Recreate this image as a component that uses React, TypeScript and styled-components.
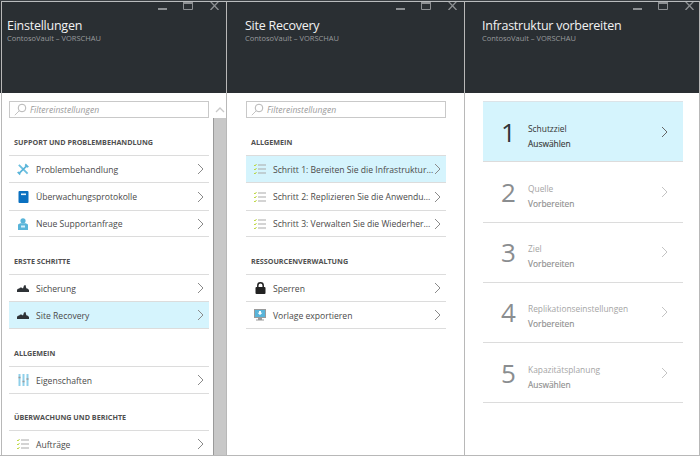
import React from "react";
import styled, { createGlobalStyle } from "styled-components";

const Global = createGlobalStyle`
  html, body { margin: 0; padding: 0; background: #fff; }
  body { font-family: "Open Sans", "Noto Sans", "Liberation Sans", sans-serif; }
`;

const Frame = styled.div`
  width: 700px;
  height: 456px;
  box-sizing: border-box;
  display: flex;
  overflow: hidden;
  padding-left: 1px;
  background: linear-gradient(#2a2f33 92px, #fff 92px);
  border-top: 1px solid #3a3f43;
  border-bottom: 1px solid #b8b8b8;
`;

const Blade = styled.section<{ $w: number; $first?: boolean }>`
  width: ${(p) => p.$w}px;
  flex: none;
  box-sizing: border-box;
  display: flex;
  flex-direction: column;
  border-right: 1px solid #b8b8b8;
  border-left: ${(p) => (p.$first ? "1px solid #b8b8b8" : "none")};
  overflow: hidden;
`;

const Header = styled.header<{ $pl: number }>`
  height: 92px;
  flex: none;
  box-sizing: border-box;
  background: #2a2f33;
  border-top: 1px solid #b9bcbe;
  padding-left: ${(p) => p.$pl}px;
  display: flex;
  flex-direction: column;
`;

const Controls = styled.div<{ $mr: number }>`
  height: 8px;
  display: flex;
  justify-content: flex-end;
  margin-right: ${(p) => p.$mr}px;
`;

const Title = styled.h1`
  margin: 6px 0 0;
  font-size: 12.5px;
  line-height: 20px;
  font-weight: 400;
  color: #f2f2f2;
  letter-spacing: -0.25px;
  white-space: nowrap;
`;

const Subtitle = styled.div`
  font-size: 7.5px;
  line-height: 9px;
  margin-top: -2px;
  color: #989b9d;
  font-weight: 400;
  white-space: nowrap;
`;

const Body = styled.div`
  flex: 1;
  display: flex;
  min-height: 0;
  overflow: hidden;
`;

const Content = styled.div<{ $pl: number }>`
  width: 200px;
  padding: 8px 0 0 ${(p) => p.$pl}px;
  flex: none;
`;

const Search = styled.div`
  height: 15px;
  border: 1px solid #c9c9c9;
  display: flex;
  align-items: center;
  gap: 3px;
  padding-left: 4px;
  color: #9a9a9a;
  font-size: 8.6px;
  font-style: italic;
`;

const SectionTitle = styled.h2<{ $top: number }>`
  margin: ${(p) => p.$top}px 0 0;
  padding-left: 5px;
  height: 12px;
  font-size: 7.2px;
  line-height: 11px;
  font-weight: 700;
  color: #505050;
  white-space: nowrap;
`;

const List = styled.div`
  margin-top: 6px;
  border-top: 1px solid #dcdcdc;
`;

const Row = styled.div<{ $active?: boolean; $h?: number }>`
  height: ${(p) => p.$h ?? 26}px;
  border-bottom: 1px solid #dcdcdc;
  background: ${(p) => (p.$active ? "#d5f4fd" : "transparent")};
  display: flex;
  align-items: center;
  padding-left: 8px;
  padding-right: 5px;
  font-size: 8.6px;
  color: #4a4a4a;
  white-space: nowrap;
`;

const RowIcon = styled.span`
  width: 12px;
  height: 14px;
  flex: none;
  margin-right: 7px;
  display: flex;
  align-items: center;
  justify-content: center;
`;

const RowLabel = styled.span`
  flex: 1;
  min-width: 0;
  padding-top: 1px;
`;

const Scrollbar = styled.div`
  width: 13px;
  margin-left: 4px;
  flex: none;
  display: flex;
  flex-direction: column;
`;

const ScrollUp = styled.div`
  height: 25px;
  flex: none;
  display: flex;
  align-items: center;
  justify-content: center;
  padding-top: 9px;
  box-sizing: border-box;
`;

const ScrollThumb = styled.div`
  flex: 1;
  background: #c8c8c8;
  border-left: 1px solid #9a9a9a;
  box-sizing: border-box;
`;

const Steps = styled.div`
  margin: 8px 0 0 18px;
  width: 200px;
  border-top: 1px solid #dce3e8;
`;

const Step = styled.div<{ $active?: boolean }>`
  height: 59.25px;
  border-bottom: 1px solid #dcdcdc;
  background: ${(p) => (p.$active ? "#d5f4fd" : "transparent")};
  display: flex;
  align-items: center;
  padding-left: 18px;
  padding-right: 15px;
  color: ${(p) => (p.$active ? "#333" : "#a5a5a5")};
`;

const StepNumber = styled.div<{ $active?: boolean }>`
  width: 27px;
  font-size: 26px;
  line-height: 30px;
  flex: none;
  color: ${(p) => (p.$active ? "#2f3438" : "#8a8d90")};
`;

const StepText = styled.div`
  flex: 1;
  font-size: 8.4px;
  line-height: 15px;
  padding-top: 8px;
`;

const StepAction = styled.div<{ $active?: boolean }>`
  color: ${(p) => (p.$active ? "#3c3c3c" : "#8f8f8f")};
  -webkit-text-stroke: 0.15px currentColor;
`;

const ControlIcon = styled.svg<{ $mr?: number }>`
  flex: none;
  margin-right: ${(p) => p.$mr ?? 0}px;
  fill: none;
  stroke: #8d9093;
`;

const ChevronIcon = styled.svg`
  flex: none;
  fill: none;
`;

const Chevron = ({ color = "#8a8a8a" }: { color?: string }) => (
  <ChevronIcon width="7" height="12" viewBox="0 0 7 12">
    <path d="M1 1l5 5-5 5" stroke={color} strokeWidth="1" />
  </ChevronIcon>
);

const Glass = () => (
  <svg width="13" height="13" viewBox="0 0 13 13">
    <circle cx="8" cy="5" r="3.8" fill="none" stroke="#b5b5b5" />
    <path d="M5.200 7.800L.8 12.200" stroke="#c4c4c4" fill="none" />
  </svg>
);

const Tools = () => (
  <svg width="13" height="13" viewBox="0 0 13 13">
    <path d="M2 1.500l9.500 9.500" stroke="#6cc0e0" strokeWidth="2" />
    <path d="M10.500 2.500L2.500 10.500" stroke="#59b4d9" strokeWidth="1.800" />
    <path d="M9.500 0l3.500 3.500-2 1.200-2.700-2.700zM0 9.800l3 3 1-1.800-2.200-2.200z" fill="#59b4d9" />
  </svg>
);
const Book = () => (
  <svg width="11" height="12" viewBox="0 0 11 12">
    <rect x=".5" y="0" width="10" height="12" rx="1" fill="#0a70c0" />
    <rect x="3" y="2.500" width="5" height="1.600" fill="#e6f4fb" />
  </svg>
);
const Support = () => (
  <svg width="10" height="12" viewBox="0 0 10 12">
    <circle cx="5" cy="2.800" r="2.600" fill="#59b4d9" />
    <path d="M0 12V6.500l2.200-1.200h5.600L10 6.500V12z" fill="#59b4d9" />
    <path d="M3 7.500h4v2H3z" fill="#d4effa" />
  </svg>
);
const Cloud = () => (
  <svg width="12" height="7" viewBox="0 0 12 7">
    <path d="M0 7V5.500C0 4.300 1 3.500 2.200 3.600 2.800 2.600 3.800 2.300 4.800 2.800L6 3.600 7 .5 8.500 0l.8 3.200 1.500.5L12 5v2z" fill="#2e3236" />
  </svg>
);
const Props = () => (
  <svg width="11" height="12" viewBox="0 0 11 12">
    <path d="M1.500 0v12M5.500 0v12M9.500 0v12" stroke="#8fd0ea" strokeWidth="2" />
    <path d="M.5 3.500h2M4.500 7.500h2M8.500 5h2" stroke="#9a9a9a" strokeWidth="1.600" />
  </svg>
);
const Tasks = () => (
  <svg width="12" height="10" viewBox="0 0 12 10">
    <path d="M4 1h8M4 5h8M4 9h8" stroke="#a9a9a9" strokeWidth="1" />
    <path d="M0 1l1 1 1.500-2M0 5l1 1 1.500-2M0 9l1 1 1.500-2" stroke="#b8d432" strokeWidth=".9" fill="none" />
  </svg>
);
const Lock = () => (
  <svg width="11" height="12" viewBox="0 0 11 12">
    <path d="M2.800 5.500V3.500a2.700 2.700 0 0 1 5.400 0v2" fill="none" stroke="#222" strokeWidth="1.500" />
    <rect x=".5" y="5" width="10" height="7" rx="1" fill="#222" />
  </svg>
);
const Monitor = () => (
  <svg width="12" height="12" viewBox="0 0 12 12">
    <rect x=".5" y=".5" width="11" height="8" fill="#59b4d9" stroke="#9a9a9a" />
    <path d="M4 9h4v1.500h2v1H2v-1h2z" fill="#9a9a9a" />
    <path d="M5 2h2v1.800h1.500L6 6 3.500 3.800H5z" fill="#fff" />
  </svg>
);

const ScrollChevron = () => (
  <svg width="10" height="6" viewBox="0 0 10 6">
    <path d="M1 5l4-4 4 4" fill="none" stroke="#c9c9c9" strokeWidth="1.300" />
  </svg>
);

const BladeHead = ({ title, pl, mr }: { title: string; pl: number; mr: number }) => (
  <Header $pl={pl}>
    <Controls $mr={mr}>
      <ControlIcon width="9" height="8" viewBox="0 0 9 8" $mr={16}>
        <path d="M0 7h9" strokeWidth="2" />
      </ControlIcon>
      <ControlIcon width="10" height="8" viewBox="0 0 10 8" $mr={17}>
        <path d="M.5 -1h9v8.500h-9z" />
        <path d="M0 1h10" strokeWidth="2" />
      </ControlIcon>
      <ControlIcon width="9" height="8" viewBox="0 0 9 8">
        <path d="M.5 -.5l8 8.500M8.500 -.5l-8 8.500" strokeWidth="1.300" />
      </ControlIcon>
    </Controls>
    <Title>{title}</Title>
    <Subtitle>ContosoVault – VORSCHAU</Subtitle>
  </Header>
);

const Item = ({
  icon,
  label,
  active,
  h,
}: {
  icon: React.ReactNode;
  label: string;
  active?: boolean;
  h?: number;
}) => (
  <Row $active={active} $h={h}>
    <RowIcon>{icon}</RowIcon>
    <RowLabel>{label}</RowLabel>
    <Chevron />
  </Row>
);

const steps = [
  ["1", "Schutzziel", "Auswählen"],
  ["2", "Quelle", "Vorbereiten"],
  ["3", "Ziel", "Vorbereiten"],
  ["4", "Replikationseinstellungen", "Vorbereiten"],
  ["5", "Kapazitätsplanung", "Auswählen"],
];

export default function App() {
  return (
    <>
      <Global />
      <Frame>
        <Blade $w={226} $first>
          <BladeHead title="Einstellungen" pl={5} mr={7} />
          <Body>
            <Content $pl={7}>
              <Search>
                <Glass />
                Filtereinstellungen
              </Search>
              <SectionTitle $top={19}>SUPPORT UND PROBLEMBEHANDLUNG</SectionTitle>
              <List>
                <Item icon={<Tools />} label="Problembehandlung" />
                <Item icon={<Book />} label="Überwachungsprotokolle" h={27} />
                <Item icon={<Support />} label="Neue Supportanfrage" h={25} />
              </List>
              <SectionTitle $top={19}>ERSTE SCHRITTE</SectionTitle>
              <List>
                <Item icon={<Cloud />} label="Sicherung" />
                <Item icon={<Cloud />} label="Site Recovery" active />
              </List>
              <SectionTitle $top={19}>ALLGEMEIN</SectionTitle>
              <List>
                <Item icon={<Props />} label="Eigenschaften" />
              </List>
              <SectionTitle $top={18}>ÜBERWACHUNG UND BERICHTE</SectionTitle>
              <List>
                <Item icon={<Tasks />} label="Aufträge" />
              </List>
            </Content>
            <Scrollbar>
              <ScrollUp>
                <ScrollChevron />
              </ScrollUp>
              <ScrollThumb />
            </Scrollbar>
          </Body>
        </Blade>
        <Blade $w={238}>
          <BladeHead title="Site Recovery" pl={18} mr={7} />
          <Body>
            <Content $pl={19}>
              <Search>
                <Glass />
                Filtereinstellungen
              </Search>
              <SectionTitle $top={19}>ALLGEMEIN</SectionTitle>
              <List>
                <Item icon={<Tasks />} label="Schritt 1: Bereiten Sie die Infrastruktur..." active />
                <Item icon={<Tasks />} label="Schritt 2: Replizieren Sie die Anwendu..." h={27} />
                <Item icon={<Tasks />} label="Schritt 3: Verwalten Sie die Wiederher..." h={25} />
              </List>
              <SectionTitle $top={19}>RESSOURCENVERWALTUNG</SectionTitle>
              <List>
                <Item icon={<Lock />} label="Sperren" />
                <Item icon={<Monitor />} label="Vorlage exportieren" />
              </List>
            </Content>
          </Body>
        </Blade>
        <Blade $w={235}>
          <BladeHead title="Infrastruktur vorbereiten" pl={17} mr={5} />
          <Steps>
            {steps.map(([n, name, action], i) => (
              <Step key={n} $active={i === 0}>
                <StepNumber $active={i === 0}>{n}</StepNumber>
                <StepText>
                  <div>{name}</div>
                  <StepAction $active={i === 0}>{action}</StepAction>
                </StepText>
                <Chevron color={i === 0 ? "#666" : "#c4c4c4"} />
              </Step>
            ))}
          </Steps>
        </Blade>
      </Frame>
    </>
  );
}
